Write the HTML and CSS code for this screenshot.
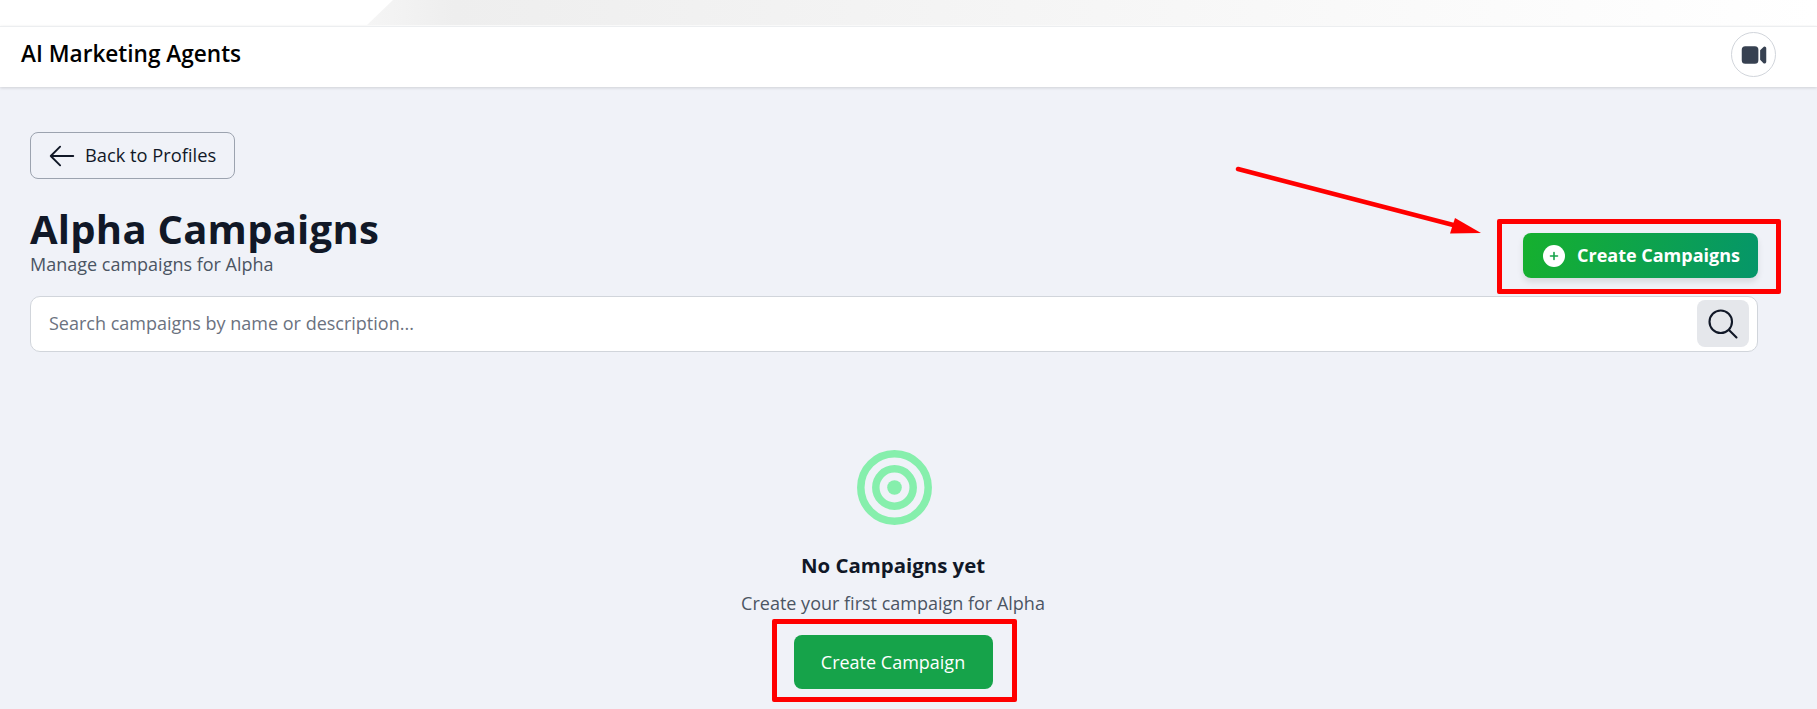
FILE: index.html
```html
<!DOCTYPE html>
<html lang="en">
<head>
<meta charset="utf-8">
<title>Alpha Campaigns</title>
<link rel="stylesheet" href="styles.css">
</head>
<body>
<div class="strip"><div class="strip-fade"></div></div>
<header class="topbar">
  <div class="brand">AI Marketing Agents</div>
  <button class="video-btn" aria-label="Video">
    <svg width="28" height="28" viewBox="0 0 24 24" fill="#374151"><path d="M4.5 4.5a3 3 0 0 0-3 3v9a3 3 0 0 0 3 3h8.25a3 3 0 0 0 3-3v-9a3 3 0 0 0-3-3H4.5ZM19.94 18.75l-2.69-2.69V7.94l2.69-2.69c.944-.945 2.56-.276 2.56 1.06v11.38c0 1.336-1.616 2.005-2.56 1.06Z"/></svg>
  </button>
</header>
<main class="content">
  <button class="back-btn">
    <svg width="30" height="30" viewBox="0 0 24 24" fill="none" stroke="#111827" stroke-width="1.5" stroke-linecap="round" stroke-linejoin="round"><path d="M10.5 19.5 3 12m0 0 7.5-7.5M3 12h18"/></svg>
    <span class="back-label">Back to Profiles</span>
  </button>
  <div class="title-row">
    <div class="title-block">
      <h1>Alpha Campaigns</h1>
      <p>Manage campaigns for Alpha</p>
    </div>
    <button class="create-top">
      <svg width="22" height="22" viewBox="0 0 22 22"><circle cx="11" cy="11" r="11" fill="#fff"/><path d="M11 7.5v7M7.5 11h7" stroke="#16a34a" stroke-width="1.6" stroke-linecap="round"/></svg>
      <span class="create-top-label">Create Campaigns</span>
    </button>
  </div>
  <div class="search">
    <span class="placeholder">Search campaigns by name or description...</span>
    <span class="search-btn">
      <svg width="36" height="36" viewBox="0 0 24 24" fill="none" stroke="#111827" stroke-width="1.4" stroke-linecap="round" stroke-linejoin="round"><path d="m21 21-5.197-5.197m0 0A7.5 7.5 0 1 0 5.196 5.196a7.5 7.5 0 0 0 10.607 10.607Z"/></svg>
    </span>
  </div>
  <section class="empty">
    <svg class="target" width="75" height="75" viewBox="0 0 75 75" fill="none" stroke="#86efac" stroke-width="7.5"><circle cx="37.5" cy="37.5" r="33.7"/><circle cx="37.5" cy="37.5" r="18.7"/><circle cx="37.5" cy="37.5" r="7.3" fill="#86efac" stroke="none"/></svg>
    <h2>No Campaigns yet</h2>
    <p>Create your first campaign for Alpha</p>
    <button class="create-main">Create Campaign</button>
  </section>
</main>
<div class="mark mark-top"></div>
<div class="mark mark-main"></div>
<svg class="arrow" width="260" height="80" viewBox="0 0 260 80"><path d="M3 3 226 61" stroke="#ff0000" stroke-width="4.5" stroke-linecap="round" fill="none"/><path d="M246 67 215 67.500 220 52Z" fill="#ff0000"/></svg>
</body>
</html>
```
FILE: styles.css
```css
* { box-sizing: border-box; }
html, body { margin: 0; height: 709px; overflow: hidden; }
body {
  background: #f0f2f8;
  font-family: "Open Sans", "Noto Sans", sans-serif;
  color: #111827;
  position: relative;
}
button { font-family: inherit; cursor: pointer; }
.strip { height: 26px; background: #fff; padding-left: 367px; }
.strip-fade {
  height: 25px;
  background: linear-gradient(90deg, #f5f5f5 0, #eeeeee 6%, #f5f5f5 45%, #ffffff 100%);
  clip-path: polygon(26px 0, 100% 0, 100% 100%, 0 100%);
}
.topbar {
  height: 61px;
  background: #fff;
  display: flex;
  align-items: center;
  justify-content: space-between;
  padding: 0 41px 8px 21px;
  box-shadow: 0 1px 3px rgba(0, 0, 0, .14);
  border-top: 1px solid #eceef0;
}
.brand { font-size: 22.6px; font-weight: 600; color: #000; }
.video-btn {
  width: 45px;
  height: 45px;
  margin-top: 3px;
  border-radius: 50%;
  border: 1px solid #d1d5db;
  background: #fff;
  display: flex;
  align-items: center;
  justify-content: center;
  padding: 0;
}
.content { padding: 45px 59px 0 30px; }
.back-btn {
  display: flex;
  align-items: center;
  gap: 8px;
  width: 205px;
  height: 47px;
  padding: 0 0 0 16px;
  border: 1px solid #9ca3af;
  border-radius: 8px;
  background: transparent;
  font-size: 18.3px;
  font-weight: 500;
  color: #111827;
}
.back-label { margin-bottom: 2px; }
.title-row {
  display: flex;
  justify-content: space-between;
  align-items: flex-end;
  margin-top: 29px;
}
.title-block h1 { margin: 0; font-size: 40px; letter-spacing: .25px; line-height: 42px; font-weight: 700; color: #111827; }
.title-block p { margin: 0; font-size: 18px; line-height: 28px; color: #4b5563; }
.create-top {
  display: flex;
  align-items: center;
  gap: 12px;
  width: 235px;
  height: 45px;
  padding: 0 0 0 20px;
  border: 0;
  border-radius: 8px;
  background: linear-gradient(100deg, #16b02e, #059669);
  box-shadow: 0 4px 6px rgba(0, 0, 0, .1);
  color: #fff;
  font-size: 18px;
  font-weight: 700;
}
.create-top-label { margin-bottom: 2px; }
.search {
  display: flex;
  align-items: center;
  justify-content: space-between;
  height: 56px;
  margin-top: 18px;
  padding: 0 8px 0 18px;
  background: #fff;
  border: 1px solid #d1d5db;
  border-radius: 10px;
}
.placeholder { font-size: 18px; color: #6b7280; margin-bottom: 2px; }
.search-btn {
  width: 52px;
  height: 47px;
  margin-bottom: 1px;
  border-radius: 8px;
  background: #e5e7eb;
  display: flex;
  align-items: center;
  justify-content: center;
}
.empty { display: flex; flex-direction: column; align-items: center; margin-top: 98px; padding-right: 2px; }
.target { display: block; margin-left: 2px; }
.empty h2 { margin: 26px 0 0; font-size: 20.4px; line-height: 28px; font-weight: 700; color: #111827; }
.empty p { margin: 12px 0 0; font-size: 18px; line-height: 24px; color: #4b5563; }
.create-main {
  width: 199px;
  height: 54px;
  margin-top: 20px;
  padding: 0;
  border: 0;
  border-radius: 8px;
  background: #16a34a;
  color: #fff;
  font-size: 18px;
}
.mark { position: absolute; border: 5px solid #ff0000; border-radius: 2px; }
.mark-top { left: 1497px; top: 219px; width: 284px; height: 75px; }
.mark-main { left: 772px; top: 619px; width: 245px; height: 83px; }
.arrow { position: absolute; left: 1235px; top: 166px; }
```
